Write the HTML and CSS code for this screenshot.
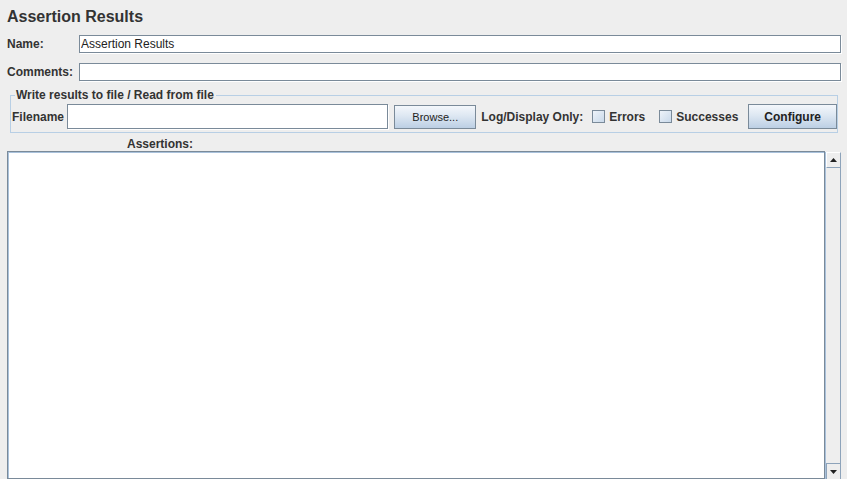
FILE: index.html
```html
<!DOCTYPE html>
<html lang="en">
<head>
<meta charset="utf-8">
<title>Assertion Results</title>
<link rel="stylesheet" href="styles.css">
</head>
<body>
<div class="panel">
  <h1 class="title">Assertion Results</h1>

  <div class="row">
    <label class="lbl" for="name">Name:</label>
    <input id="name" class="field" type="text" value="Assertion Results">
  </div>
  <div class="row row2">
    <label class="lbl" for="comments">Comments:</label>
    <input id="comments" class="field" type="text">
  </div>

  <fieldset class="group">
    <legend>Write results to file / Read from file</legend>
    <div class="filerow">
      <label class="flbl" for="fname">Filename</label>
      <input id="fname" class="field tall" type="text">
      <button class="btn browse">Browse...</button>
      <span class="only">Log/Display Only:</span>
      <label class="opt"><input type="checkbox" class="chk"> Errors</label>
      <label class="opt"><input type="checkbox" class="chk"> Successes</label>
      <button class="btn cfg">Configure</button>
    </div>
  </fieldset>

  <div class="alabel">Assertions:</div>

  <div class="pane">
    <div class="view"></div>
    <div class="sbar">
      <div class="arrow up">
        <svg viewBox="0 0 7 4" width="7" height="4"><polygon points="3.5,0 7,4 0,4" fill="#222"/></svg>
      </div>
      <div class="track"></div>
      <div class="arrow down">
        <svg viewBox="0 0 7 4" width="7" height="4"><polygon points="0,0 7,0 3.5,4" fill="#222"/></svg>
      </div>
    </div>
  </div>
</div>
</body>
</html>
```

FILE: styles.css
```css
*{ box-sizing:border-box; }
html,body{ margin:0; height:100%; overflow:hidden; }
body{ background:#eeeeee; color:#333333; font-family:"Liberation Sans",Arial,Helvetica,sans-serif; font-size:12px; }

.panel{ display:flex; flex-direction:column; height:100%; }

.title{ margin:0; padding:7px 0 0 7px; font-size:16px; line-height:20px; font-weight:bold; }

/* name / comments */
.row{ display:flex; align-items:center; margin:8px 6px 0 7px; }
.row2{ margin-top:10px; }
.lbl{ width:72px; flex:0 0 auto; font-weight:bold; }
.field{ flex:1 1 auto; min-width:0; height:18px; padding:0 1px; border:1px solid #7a8a99; background:#fff; color:#222; font:12px "Liberation Sans",Arial,sans-serif; outline:none; box-shadow:1px 1px 0 #fff; }
.field.tall{ height:25px; }

/* file group */
.group{ margin:8px 9px 0 10px; padding:2px 0 3px 1px; border:1px solid #b8cfe5; min-width:0; }
.group legend{ margin-left:3px; padding:0 2px 0 1px; font-weight:bold; line-height:13px; }
.filerow{ display:flex; align-items:center; }
.flbl{ font-weight:bold; margin:0 3px 0 0; }
.btn{ height:24px; border:1px solid #7a8a99; background:linear-gradient(#f4f7fb,#dde7f2 45%,#bccfe4); color:#222; font-family:"Liberation Sans",Arial,sans-serif; cursor:pointer; }
.browse{ margin-left:6px; padding:0 17px; font-size:11px; }
.only{ font-weight:bold; margin-left:5px; margin-right:4px; }
.opt{ display:flex; align-items:center; gap:4px; font-weight:bold; margin-left:5px; margin-right:8px; }
.opt + .opt{ margin-left:6px; }
.chk{ appearance:none; -webkit-appearance:none; margin:0; width:13px; height:13px; border:1px solid #7a8a99; background:linear-gradient(135deg,#eef3f9,#c9d9ea); }
.cfg{ height:25px; margin-left:2px; padding:0 15px; font-size:12px; font-weight:bold; }

.alabel{ margin:4px 0 0 127px; font-weight:bold; line-height:14px; }

/* assertions text area with scrollbar */
.pane{ flex:1 1 auto; display:flex; margin:0 6px 0 7px; min-height:0; }
.view{ flex:1 1 auto; background:#fff; border:1px solid #7a8a99; box-shadow:inset 1px 1px 0 #a9c1db; }
.sbar{ width:16px; display:flex; flex-direction:column; border-left:1px solid #a9c1db; margin-top:1px; }
.arrow{ height:16px; display:flex; align-items:center; justify-content:center; background:#eeeeee; border:1px solid #8da3ba; }
.arrow.up{ border-top:1px solid #fff; border-left:1px solid #fff; }
.track{ flex:1 1 auto; background:#eeeeee; border-right:1px solid #8da3ba; }
.arrow.down{ border-bottom:0; }
```
